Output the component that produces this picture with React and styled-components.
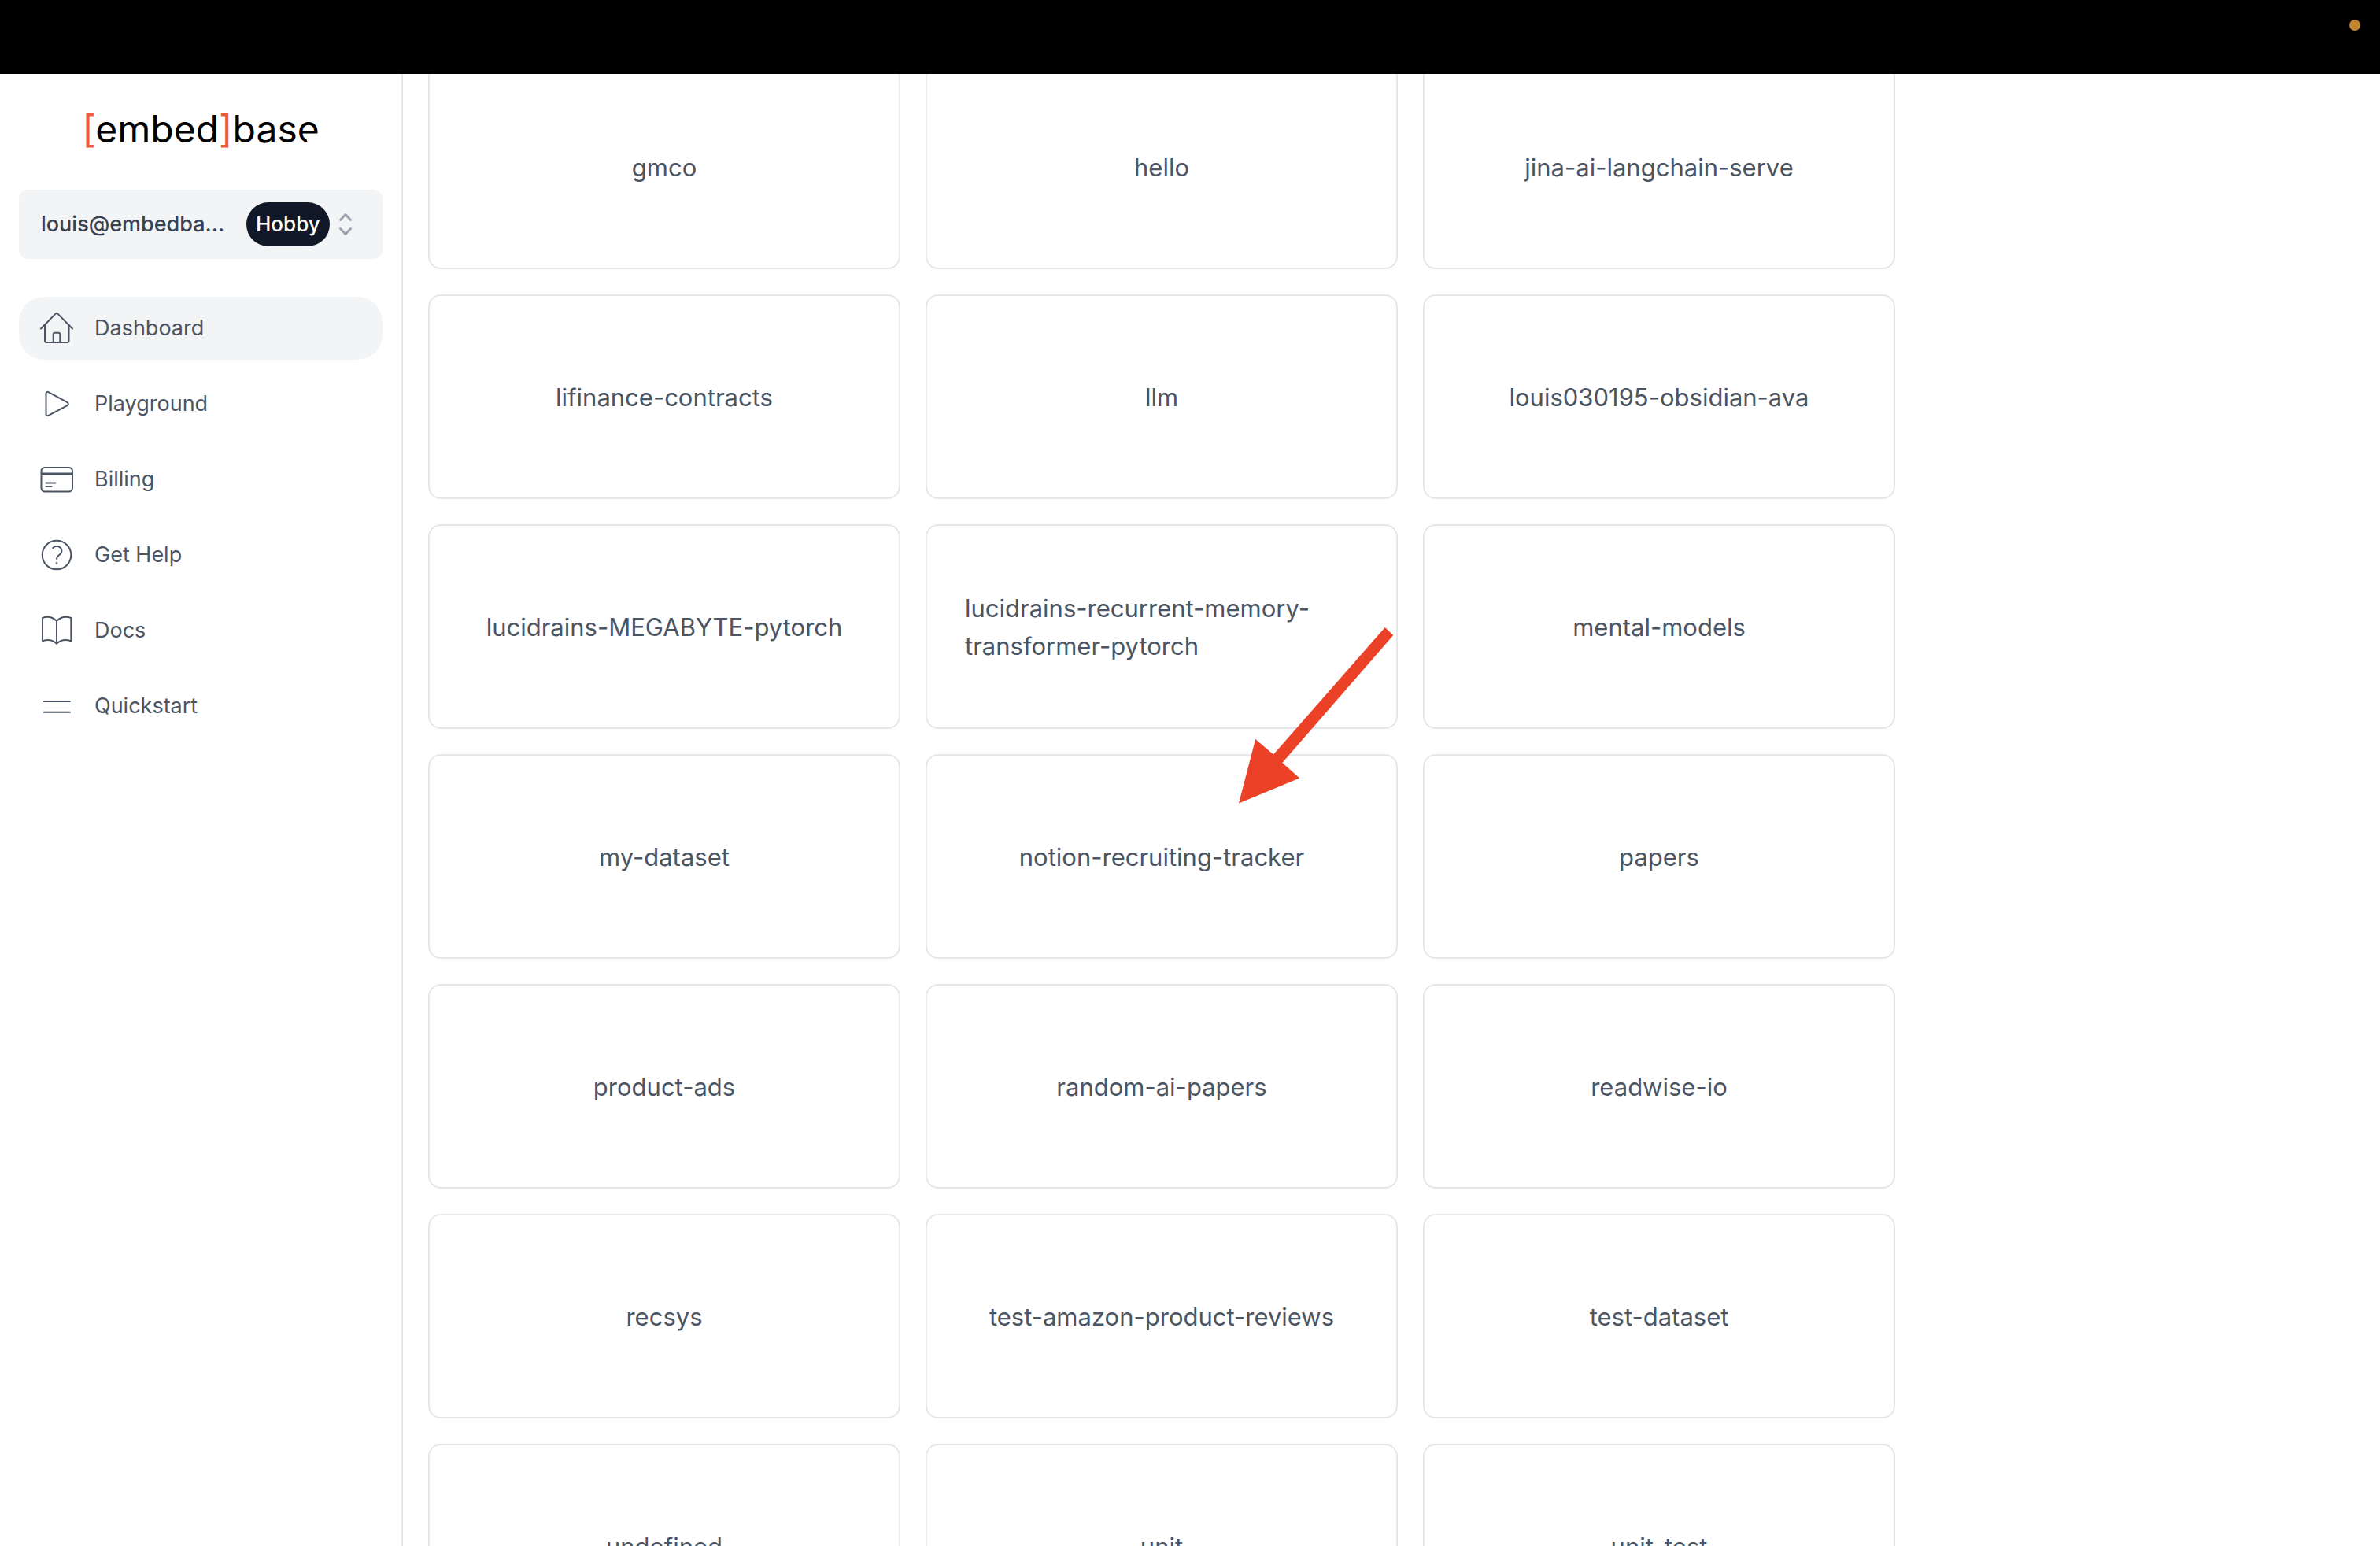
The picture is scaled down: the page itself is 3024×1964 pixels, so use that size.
import React, { useLayoutEffect, useRef } from "react";
import styled, { createGlobalStyle } from "styled-components";

const GlobalStyle = createGlobalStyle`
  *, *::before, *::after { box-sizing: border-box; }
  body {
    margin: 0;
    background: #fff;
    color: #4b5563;
    font-family: Inter, "Liberation Sans", sans-serif;
  }
`;

const Shell = styled.div`
  display: flex;
  flex-direction: column;
  height: 100vh;
  overflow: hidden;
`;

const TopBar = styled.header`
  display: flex;
  justify-content: flex-end;
  flex: none;
  height: 94px;
  padding: 25px;
  background: #000;
`;

const StatusDot = styled.span`
  width: 14px;
  height: 14px;
  border-radius: 50%;
  background: #c3842f;
`;

const Body = styled.div`
  display: flex;
  flex: 1;
  min-height: 0;
`;

const Sidebar = styled.aside`
  display: flex;
  flex-direction: column;
  flex: none;
  width: 512px;
  padding: 40px 24px;
  border-right: 2px solid #e5e7eb;
`;

const Logo = styled.a`
  align-self: center;
  color: #000;
  font-size: 48px;
  line-height: 60px;
  text-decoration: none;
`;

const Bracket = styled.span`
  color: #ef5a3c;
`;

/* The wordmark's last letter loses its lower right curve. */
const CutLetter = styled.span`
  position: relative;

  &::after {
    content: "";
    position: absolute;
    right: 0;
    bottom: 8px;
    width: 18px;
    height: 13px;
    background: #fff;
    clip-path: polygon(0 0, 100% 0, 100% 100%, -40% 100%, -40% 80%, 20% 80%);
  }
`;

const AccountButton = styled.button`
  display: flex;
  align-items: center;
  width: 100%;
  height: 88px;
  margin: 47px 0 48px;
  padding: 0 28px;
  border: 0;
  border-radius: 12px;
  background: #f3f4f6;
  color: #374151;
  font: inherit;
  font-size: 27px;
  font-weight: 500;
  line-height: 40px;
  cursor: pointer;
`;

const Email = styled.span`
  flex: none;
  width: 261px;
  text-align: left;
`;

const Badge = styled.span`
  padding: 8px 12px;
  border-radius: 28px;
  background: #111827;
  color: #fff;
  font-size: 26px;
`;

const Chevrons = styled.svg`
  flex: none;
  width: 40px;
  height: 40px;
  fill: none;
  stroke: #9ca3af;
  stroke-width: 3;
  stroke-linecap: round;
  stroke-linejoin: round;
`;

const Nav = styled.nav`
  display: flex;
  flex-direction: column;
  gap: 16px;
`;

const NavLink = styled.a`
  display: flex;
  align-items: center;
  gap: 24px;
  height: 80px;
  padding: 0 24px;
  border-radius: 32px;
  background: ${({ $active }) => ($active ? "#f3f4f6" : "transparent")};
  color: #4b5563;
  font-size: 27px;
  line-height: 40px;
  text-decoration: none;
`;

const NavIcon = styled.svg`
  flex: none;
  width: 48px;
  height: 48px;
  fill: none;
  stroke: currentColor;
  stroke-width: 2;
  stroke-linecap: round;
  stroke-linejoin: round;
`;

const Main = styled.main`
  flex: 1;
  min-width: 0;
  padding: 32px;
  overflow-y: auto;
  scrollbar-width: none;
`;

const DatasetGrid = styled.div`
  display: grid;
  grid-template-columns: repeat(3, minmax(0, 1fr));
  gap: 32px;
  max-width: 1864px;
`;

const DatasetCard = styled.a`
  position: relative;
  display: flex;
  align-items: center;
  justify-content: center;
  height: 260px;
  padding: 49px 48px 47px;
  border: 2px solid #e5e7eb;
  border-radius: 16px;
  color: #4b5563;
  font-size: 31px;
  line-height: 48px;
  text-decoration: none;
`;

const Arrow = styled.svg`
  position: absolute;
  top: -163px;
  left: 396px;
  z-index: 1;
  width: 197px;
  height: 224px;
  fill: #eb4127;
`;

const NAV_ITEMS = [
  {
    label: "Dashboard",
    active: true,
    icon: (
      <>
        <path d="M4 24.5 22.6 5.6a2 2 0 0 1 2.8 0L44 24.5" />
        <path d="M9 20v20a2 2 0 0 0 2 2h26.500a2 2 0 0 0 2-2V20" />
        <path d="M19.700 42V31.700a2 2 0 0 1 2-2h4.600a2 2 0 0 1 2 2V42" />
      </>
    ),
  },
  {
    label: "Playground",
    icon: <path d="M10.500 10.800v26.400a2 2 0 0 0 3 1.700l24-12.800a2.200 2.200 0 0 0 0-4L13.500 9.100a2 2 0 0 0-3 1.700Z" />,
  },
  {
    label: "Billing",
    icon: (
      <>
        <rect x="4.500" y="9" width="39.500" height="30.500" rx="4.500" />
        <path d="M5 17.200h38.500" strokeWidth="3.400" strokeLinecap="butt" />
        <path d="M10.500 28.500h12M10.500 33h7" />
      </>
    ),
  },
  {
    label: "Get Help",
    icon: (
      <>
        <circle cx="24" cy="24" r="18.300" />
        <path d="M19.200 15c3-2.700 7-2.500 9.500-.2 2.300 2.200 2.300 5.600.1 7.800-2.400 2.300-4.800 3.300-4.800 6.400" />
        <circle cx="24" cy="34.500" r=".4" />
      </>
    ),
  },
  {
    label: "Docs",
    icon: (
      <path d="M24 11.700C19 7 12 5.700 6 8v29.500c6-2.300 13-1.500 18 3.200 5-4.700 12-5.500 18.300-3.200V8C36 5.700 29 7 24 11.700Zm0 0v29" />
    ),
  },
  { label: "Quickstart", icon: <path d="M7.500 18H41M7.500 31.700H41" /> },
];

const DATASETS = [
  "gmco",
  "hello",
  "jina-ai-langchain-serve",
  "lifinance-contracts",
  "llm",
  "louis030195-obsidian-ava",
  "lucidrains-MEGABYTE-pytorch",
  "lucidrains-recurrent-memory-transformer-pytorch",
  "mental-models",
  "my-dataset",
  "notion-recruiting-tracker",
  "papers",
  "product-ads",
  "random-ai-papers",
  "readwise-io",
  "recsys",
  "test-amazon-product-reviews",
  "test-dataset",
  "undefined",
  "unit",
  "unit_test",
];

const HIGHLIGHTED = "notion-recruiting-tracker";
const INITIAL_SCROLL = 44;

export default function App() {
  const mainRef = useRef(null);

  useLayoutEffect(() => {
    mainRef.current.scrollTop = INITIAL_SCROLL;
  }, []);

  return (
    <Shell>
      <GlobalStyle />
      <TopBar>
        <StatusDot />
      </TopBar>
      <Body>
        <Sidebar>
          <Logo href="#">
            <Bracket>[</Bracket>embed<Bracket>]</Bracket>bas<CutLetter>e</CutLetter>
          </Logo>
          <AccountButton type="button">
            <Email>louis@embedba...</Email>
            <Badge>Hobby</Badge>
            <Chevrons viewBox="0 0 40 40" aria-hidden="true">
              <path d="m13.500 14.500 6.500-7 6.500 7M13.500 25.500l6.500 7 6.500-7" />
            </Chevrons>
          </AccountButton>
          <Nav>
            {NAV_ITEMS.map(({ label, active, icon }) => (
              <NavLink key={label} href="#" $active={active}>
                <NavIcon viewBox="0 0 48 48" aria-hidden="true">
                  {icon}
                </NavIcon>
                {label}
              </NavLink>
            ))}
          </Nav>
        </Sidebar>
        <Main ref={mainRef}>
          <DatasetGrid>
            {DATASETS.map((name) => (
              <DatasetCard key={name} href="#">
                {name}
                {name === HIGHLIGHTED && (
                  <Arrow viewBox="0 0 197 224" aria-hidden="true">
                    <path d="M185.800 0 196.300 10 55.300 172 77.200 191.500 0 223.500 21.200 142 44 161.500Z" />
                  </Arrow>
                )}
              </DatasetCard>
            ))}
          </DatasetGrid>
        </Main>
      </Body>
    </Shell>
  );
}
